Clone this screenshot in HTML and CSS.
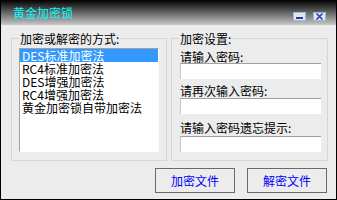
FILE: index.html
```html
<!DOCTYPE html>
<html lang="zh-CN">
<head>
<meta charset="utf-8">
<title>黄金加密锁</title>
<link rel="stylesheet" href="styles.css">
</head>
<body>
<div class="window">
  <div class="titlebar">
    <div class="title">黄金加密锁</div>
    <div class="controls">
      <div class="ctl">
        <svg width="11" height="7" viewBox="0 0 11 7"><rect x="2" y="4" width="7" height="2" fill="#2a3aa8"/></svg>
      </div>
      <div class="ctl">
        <svg width="11" height="7" viewBox="0 0 11 7"><path d="M2.5 0.5 L8.5 6.5 M8.5 0.5 L2.5 6.5" stroke="#3040c0" stroke-width="1.6"/></svg>
      </div>
    </div>
  </div>
  <div class="main">
    <fieldset class="group group-left">
      <legend>加密或解密的方式:</legend>
      <div class="listbox">
        <div class="item selected">DES标准加密法</div>
        <div class="item">RC4标准加密法</div>
        <div class="item">DES增强加密法</div>
        <div class="item">RC4增强加密法</div>
        <div class="item">黄金加密锁自带加密法</div>
      </div>
    </fieldset>
    <fieldset class="group group-right">
      <legend>加密设置:</legend>
      <div class="label l1">请输入密码:</div>
      <div class="input i1"></div>
      <div class="label l2">请再次输入密码:</div>
      <div class="input i2"></div>
      <div class="label l3">请输入密码遗忘提示:</div>
      <div class="input i3"></div>
    </fieldset>
  </div>
  <div class="buttons">
    <div class="btn">加密文件</div>
    <div class="btn">解密文件</div>
  </div>
</div>
</body>
</html>
```
FILE: styles.css
```css
html, body {
  margin: 0;
  padding: 0;
  background: #ececec;
}
body {
  font-family: "Noto Sans CJK SC", "Liberation Sans", sans-serif;
  font-size: 12px;
  line-height: 13px;
  color: #000;
}
.window {
  width: 337px;
  height: 200px;
  box-sizing: border-box;
  border: 1px solid #000;
  border-top: none;
  background: #ececec;
  display: flex;
  flex-direction: column;
}
.titlebar {
  height: 25px;
  flex: none;
  box-sizing: border-box;
  padding: 6px 10px 0 12px;
  display: flex;
  align-items: flex-start;
  background: linear-gradient(#000 0%, #5a5a5a 45%, #c8c8c8 100%);
}
.title {
  flex: 1;
  color: #00ffff;
  font-size: 12px;
  line-height: 13px;
}
.controls {
  display: flex;
  gap: 7px;
  margin-top: 6px;
}
.ctl {
  width: 13px;
  height: 9px;
  box-sizing: border-box;
  border: 1px solid #9cb8d0;
  background: #dfe6ee;
  display: flex;
}
.ctl svg { display: block; }
.main {
  display: flex;
  gap: 4px;
  padding: 7px 0 0 10px;
}
.group {
  margin: 0;
  border: 1px solid #d6d6d6;
  min-width: 0;
  box-sizing: border-box;
  height: 129px;
}
.group legend {
  padding: 0 1px;
  line-height: 13px;
}
.group-left {
  width: 156px;
  padding: 0 7px 0 7px;
}
.group-right {
  width: 157px;
  padding: 0 6px 0 8px;
  display: flex;
  flex-direction: column;
}
.group-right legend { margin-left: -1px; }
.listbox {
  margin-top: 3px;
  width: 140px;
  height: 104px;
  box-sizing: border-box;
  background: #fff;
  border-top: 1px solid #a0a0a0;
  border-left: 1px solid #a0a0a0;
  border-right: 1px solid #fff;
  border-bottom: 1px solid #fff;
}
.item {
  padding-left: 2px;
  height: 13px;
  line-height: 13px;
  white-space: nowrap;
}
.item.selected {
  background: #3399ff;
  color: #fff;
}
.label {
  line-height: 13px;
  white-space: nowrap;
}
.l1 { margin-top: 5px; }
.l2 { margin-top: 5px; }
.l3 { margin-top: 7px; }
.input {
  width: 141px;
  height: 16px;
  box-sizing: border-box;
  background: #fff;
  border-top: 1px solid #a0a0a0;
  border-left: 1px solid #c8c8c8;
}
.i2 { margin-top: 1px; }
.i3 { margin-top: 2px; }
.buttons {
  display: flex;
  justify-content: flex-end;
  gap: 12px;
  padding: 7px 9px 0 0;
}
.btn {
  width: 80px;
  height: 25px;
  box-sizing: border-box;
  border: 1px solid #6a6a6a;
  color: #0000ff;
  display: flex;
  align-items: center;
  justify-content: center;
  font-size: 12px;
}
```
